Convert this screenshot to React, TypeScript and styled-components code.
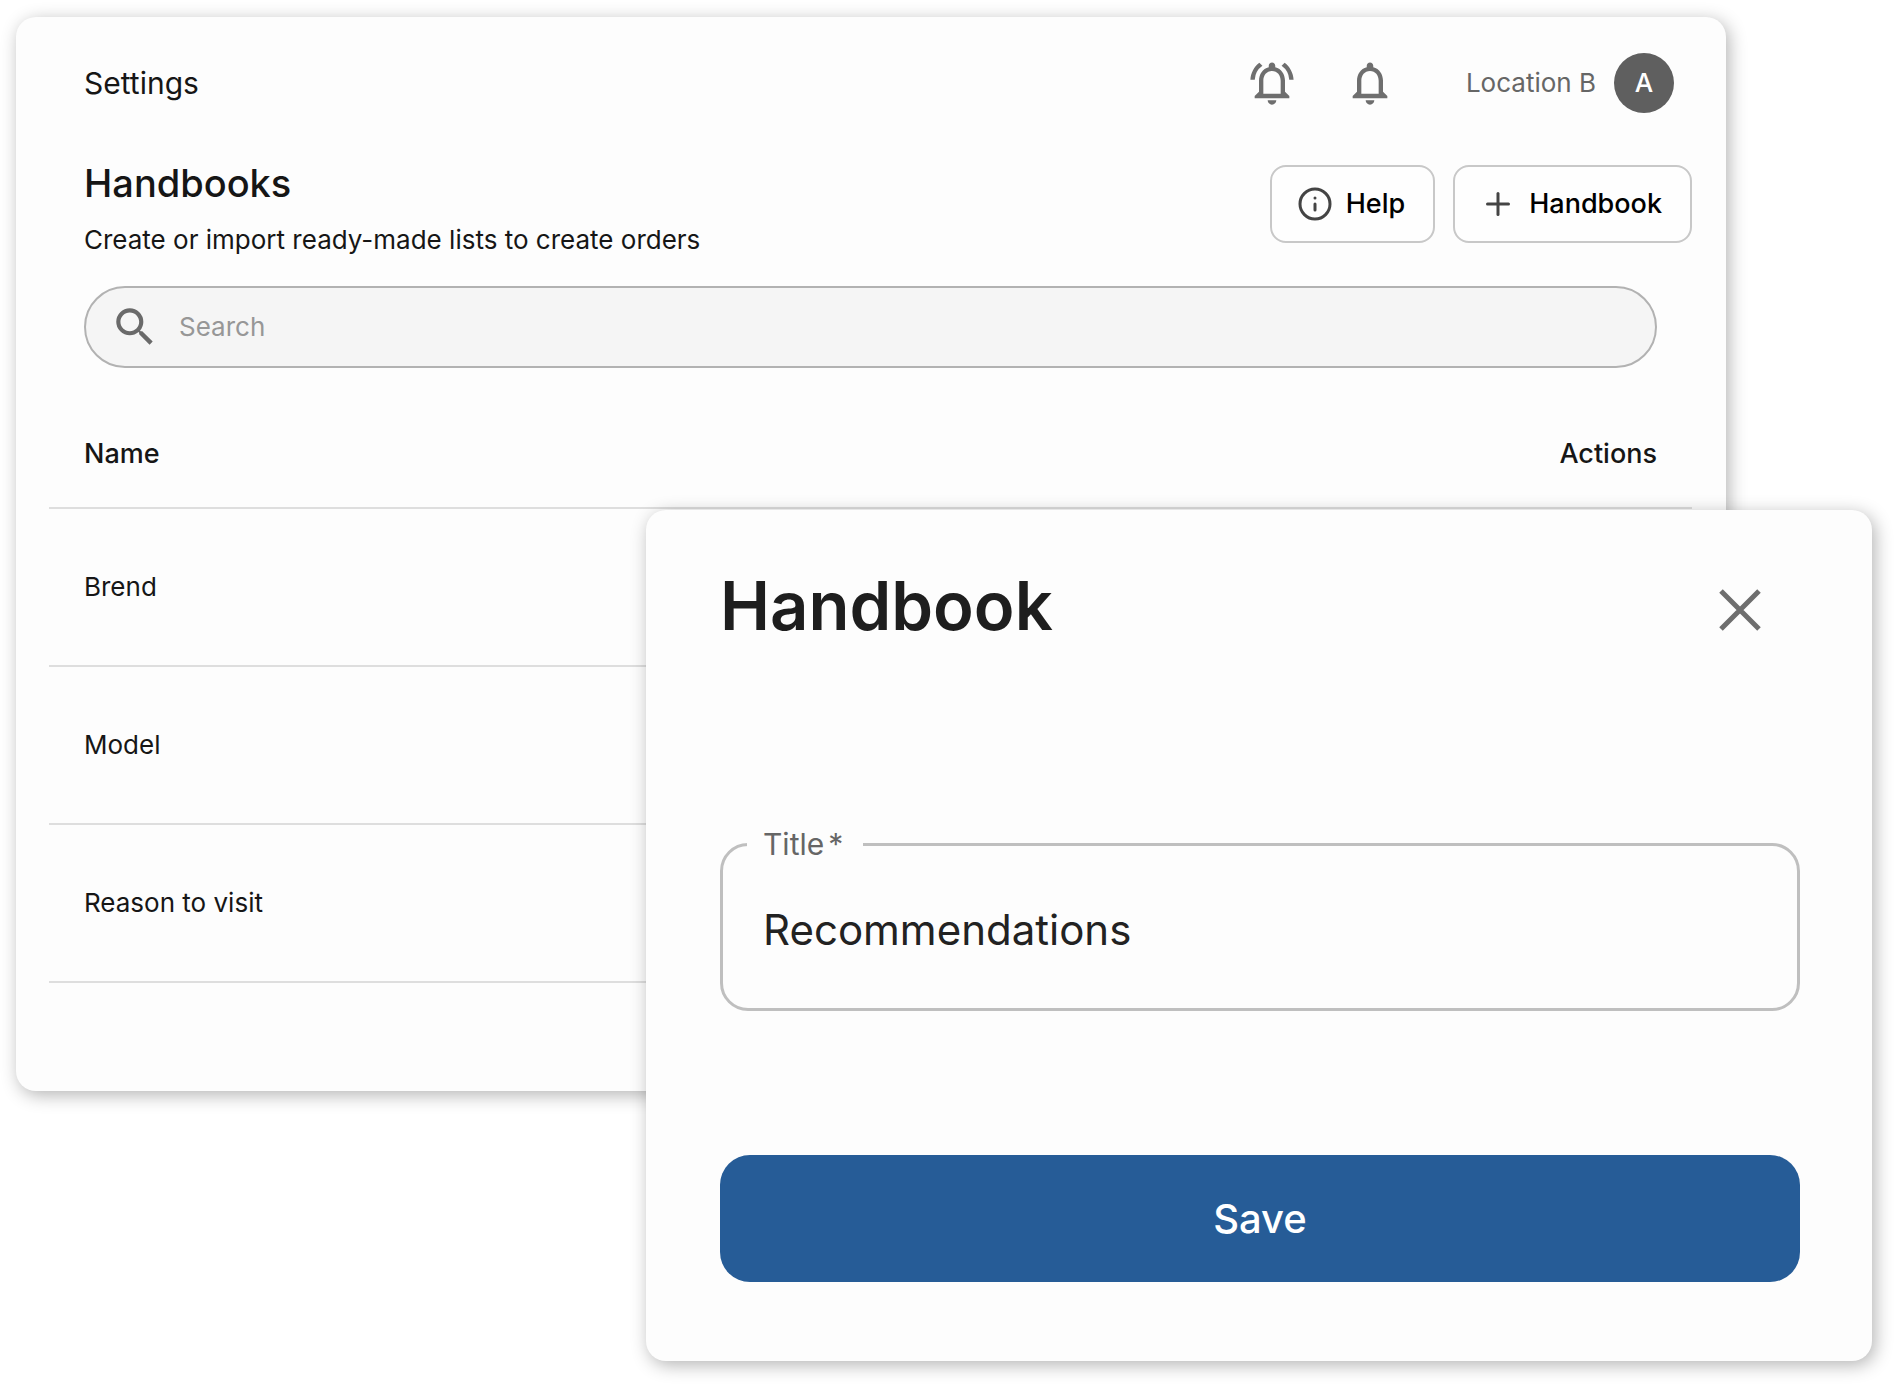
import React, { useState } from 'react';
import styled, { createGlobalStyle } from 'styled-components';
import { Info, Plus } from 'lucide-react';
import { MdNotificationsNone, MdOutlineNotificationsActive, MdSearch } from 'react-icons/md';

const GlobalStyle = createGlobalStyle`
  *, *::before, *::after { box-sizing: border-box; }
  body {
    margin: 0;
    background: #fff;
    color: #161616;
    font-family: Inter, Roboto, "Liberation Sans", sans-serif;
    font-size: 26px;
    line-height: 36px;
  }
  button, input { font: inherit; color: inherit; }
  h1, h2, p { margin: 0; }
`;

const Stage = styled.main`
  display: grid;
  grid-template-columns: 630fr 1080fr 146fr;
  padding: 17px 24px 24px 16px;
`;

const Surface = styled.section`
  background: #fdfdfd;
  border-radius: 20px;
  box-shadow: 3px 4px 18px rgba(0, 0, 0, 0.3);
`;

const Page = styled(Surface)`
  grid-area: 1 / 1 / 2 / 3;
  align-self: start;
  padding: 36px 34px 108px 33px;
`;

const TopBar = styled.header`
  display: flex;
  align-items: center;
  justify-content: space-between;
  padding: 0 18px 0 35px;
`;

const Section = styled.span`
  font-size: 30px;
`;

const TopActions = styled.div`
  display: flex;
  align-items: center;
  gap: 46px;
`;

const IconButton = styled.button`
  display: flex;
  padding: 0;
  border: 0;
  background: none;
  color: #6e6e6e;
  cursor: pointer;
`;

const Account = styled.div`
  display: flex;
  align-items: center;
  gap: 18px;
  padding-left: 24px;
  color: #666;
`;

const Avatar = styled.span`
  display: grid;
  place-items: center;
  width: 60px;
  height: 60px;
  border-radius: 50%;
  background: #5f5f5f;
  color: #fff;
  font-weight: 500;
`;

const Intro = styled.div`
  display: flex;
  align-items: flex-start;
  justify-content: space-between;
  padding: 44px 0 0 35px;
`;

const Heading = styled.h1`
  font-size: 38px;
  line-height: 52px;
  font-weight: 500;
`;

const Lead = styled.p`
  padding-top: 13px;
`;

const ButtonRow = styled.div`
  display: flex;
  gap: 18px;
  padding-top: 8px;
`;

const OutlineButton = styled.button`
  display: flex;
  align-items: center;
  gap: 13px;
  height: 78px;
  padding: 0 28px 0 25px;
  border: 2px solid #c8c8c8;
  border-radius: 16px;
  background: #fefefe;
  color: #000;
  font-size: 27px;
  font-weight: 500;
  cursor: pointer;
  svg { color: #444; }
`;

const SearchBox = styled.label`
  display: flex;
  align-items: center;
  gap: 19px;
  height: 82px;
  margin: 28px 35px 0 35px;
  padding: 0 24px;
  border: 2px solid #b2b2b2;
  border-radius: 41px;
  background: #f5f5f5;
  color: #6a6a6a;
`;

const SearchInput = styled.input`
  flex: 1;
  min-width: 0;
  padding: 0;
  border: 0;
  outline: 0;
  background: none;
  &::placeholder { color: #979797; opacity: 1; }
`;

const Table = styled.table`
  width: 100%;
  margin-top: 33px;
  border-collapse: collapse;
`;

const HeadCell = styled.th<{ $end?: boolean }>`
  height: 107px;
  padding: 0 35px;
  border-bottom: 2px solid #dedede;
  font-size: 27px;
  font-weight: 500;
  text-align: ${(p) => (p.$end ? 'right' : 'left')};
`;

const Cell = styled.td`
  height: 158px;
  padding: 0 35px;
  border-bottom: 2px solid #dedede;
`;

const Dialog = styled(Surface)`
  grid-area: 1 / 2 / 2 / 4;
  z-index: 1;
  margin-top: 493px;
  padding: 56px 72px 79px 74px;
`;

const DialogHeader = styled.header`
  display: flex;
  align-items: center;
  justify-content: space-between;
  padding-right: 36px;
`;

const DialogTitle = styled.h2`
  font-size: 67px;
  line-height: 80px;
  font-weight: 600;
  color: #1e1e1e;
`;

const CloseButton = styled(IconButton)`
  margin-top: 8px;
`;

const Field = styled.fieldset`
  height: 185px;
  margin: 180px 0 0;
  padding: 0 40px;
  border: 3px solid #bfbfbf;
  border-radius: 28px;
  min-width: 0;
`;

const FieldLabel = styled.legend`
  margin-left: -16px;
  padding: 0 20px 0 16px;
  font-size: 30px;
  color: #666;
`;

const FieldName = styled.label`
  display: flex;
  gap: 4px;
`;

const FieldInput = styled.input`
  width: 100%;
  height: 135px;
  padding: 0;
  border: 0;
  outline: 0;
  background: none;
  font-size: 42px;
  color: #222;
`;

const SaveButton = styled.button`
  display: block;
  width: 100%;
  height: 127px;
  margin-top: 144px;
  border: 0;
  border-radius: 30px;
  background: #265c97;
  color: #fff;
  font-size: 40px;
  font-weight: 500;
  cursor: pointer;
`;

const handbooks = ['Brend', 'Model', 'Reason to visit'];

function CloseIcon() {
  return (
    <svg width="48" height="48" viewBox="0 0 48 48" fill="none" stroke="currentColor" strokeWidth="5" aria-hidden="true">
      <path d="M5 5l38 38M43 5L5 43" />
    </svg>
  );
}

export default function App() {
  const [query, setQuery] = useState('');
  const [title, setTitle] = useState('Recommendations');

  return (
    <>
      <GlobalStyle />
      <Stage>
        <Page>
          <TopBar>
            <Section>Settings</Section>
            <TopActions>
              <IconButton aria-label="Active alerts"><MdOutlineNotificationsActive size={52} /></IconButton>
              <IconButton aria-label="Notifications"><MdNotificationsNone size={52} /></IconButton>
              <Account>
                <span>Location B</span>
                <Avatar>A</Avatar>
              </Account>
            </TopActions>
          </TopBar>
          <Intro>
            <div>
              <Heading>Handbooks</Heading>
              <Lead>Create or import ready-made lists to create orders</Lead>
            </div>
            <ButtonRow>
              <OutlineButton><Info size={36} strokeWidth={2} />Help</OutlineButton>
              <OutlineButton><Plus size={36} strokeWidth={2} />Handbook</OutlineButton>
            </ButtonRow>
          </Intro>
          <SearchBox>
            <MdSearch size={50} />
            <SearchInput
              type="text"
              aria-label="Search"
              placeholder="Search"
              value={query}
              onChange={(e) => setQuery(e.target.value)}
            />
          </SearchBox>
          <Table>
            <thead>
              <tr>
                <HeadCell scope="col">Name</HeadCell>
                <HeadCell scope="col" $end>Actions</HeadCell>
              </tr>
            </thead>
            <tbody>
              {handbooks.map((name) => (
                <tr key={name}>
                  <Cell>{name}</Cell>
                  <Cell />
                </tr>
              ))}
            </tbody>
          </Table>
        </Page>
        <Dialog role="dialog" aria-labelledby="dialog-title">
          <DialogHeader>
            <DialogTitle id="dialog-title">Handbook</DialogTitle>
            <CloseButton aria-label="Close"><CloseIcon /></CloseButton>
          </DialogHeader>
          <Field>
            <FieldLabel>
              <FieldName htmlFor="handbook-title">Title<span>*</span></FieldName>
            </FieldLabel>
            <FieldInput id="handbook-title" type="text" value={title} onChange={(e) => setTitle(e.target.value)} />
          </Field>
          <SaveButton>Save</SaveButton>
        </Dialog>
      </Stage>
    </>
  );
}
